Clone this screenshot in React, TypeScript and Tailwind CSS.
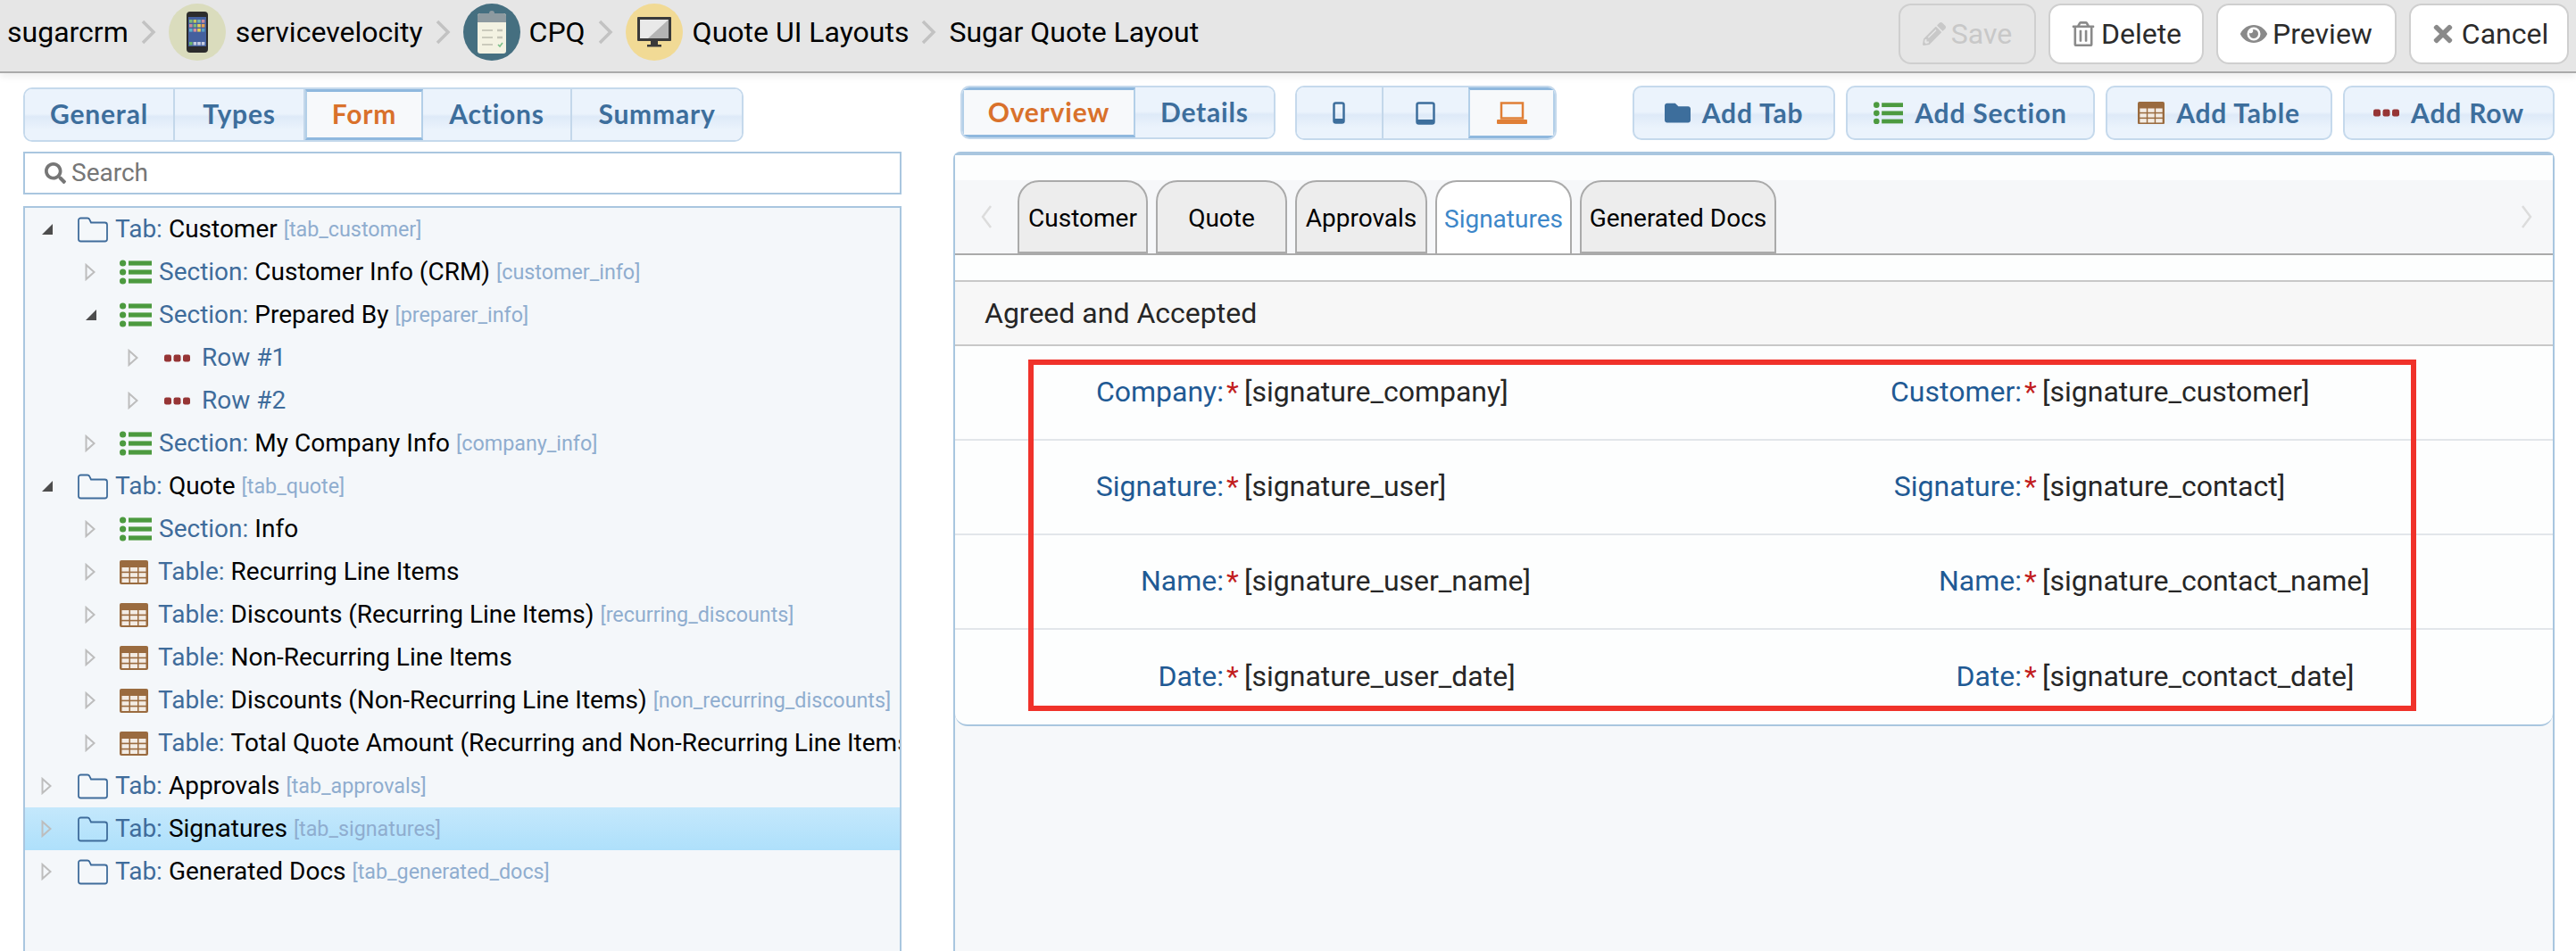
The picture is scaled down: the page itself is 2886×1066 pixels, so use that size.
import { FaPencilAlt, FaRegTrashAlt, FaEye, FaTimes, FaSearch, FaFolder } from "react-icons/fa";

const font = "[font-family:Roboto,'Liberation_Sans',sans-serif]";

function Chevron() {
  return (
    <svg width="17" height="28" viewBox="0 0 17 28" className="shrink-0">
      <path d="M2 2 L14 14 L2 26" fill="none" stroke="#c2c2c2" strokeWidth="3.5" />
    </svg>
  );
}

function PhoneArt() {
  const dots = ["#7cb87c", "#c9c95a", "#76b3b3", "#c98a9a", "#c98a9a", "#7cb87c", "#e6cf55", "#e6a050", "#5eb0c8", "#d89098", "#e6cf55", "#5aa0c0"];
  return (
    <svg width="24" height="46" viewBox="0 0 24 46">
      <rect x="0" y="0" width="24" height="46" rx="4" fill="#2c2c2c" />
      <rect x="2" y="6" width="20" height="33" fill="#44609e" />
      {dots.map((c, i) => (
        <rect key={i} x={3 + (i % 4) * 4.6} y={9 + Math.floor(i / 4) * 5} width="3.6" height="3.6" fill={c} />
      ))}
      {[0, 1, 2, 3].map((i) => (
        <rect key={i} x={3 + i * 4.6} y="34" width="3.6" height="3.6" fill={i === 0 ? "#6db56d" : "#c6cde0"} />
      ))}
    </svg>
  );
}

function ClipboardArt() {
  return (
    <svg width="34" height="50" viewBox="0 0 34 50">
      <rect x="1" y="4" width="32" height="45" rx="3" fill="#f3f2e2" />
      <path d="M1 14 V7 a3 3 0 0 1 3 -3 H30 a3 3 0 0 1 3 3 V14 Z" fill="#8d9aa0" />
      <circle cx="17" cy="4" r="3" fill="#8d9aa0" />
      <path d="M6 23 H18 M6 31 H18 M6 39 H18" stroke="#bdbdb0" strokeWidth="1.6" />
      <path d="M23 23 H29 M23 31 H29" stroke="#c5c5b8" strokeWidth="2.4" />
      <path d="M24 39 l2 2 l3 -4" stroke="#7cc08a" strokeWidth="1.6" fill="none" />
    </svg>
  );
}

function MonitorArt() {
  return (
    <svg width="38" height="34" viewBox="0 0 38 34">
      <rect x="0" y="0" width="38" height="27" rx="1" fill="#3a3a3a" />
      <rect x="3" y="3" width="32" height="21" fill="#e9e9e9" />
      <path d="M35 3 V24 H12 Z" fill="#b4b4b4" />
      <rect x="15" y="27" width="8" height="4" fill="#3a3a3a" />
      <rect x="11" y="31" width="16" height="2.5" fill="#3a3a3a" />
    </svg>
  );
}

function Bubble({ bg, children }: { bg: string; children: React.ReactNode }) {
  return (
    <span className={`flex h-16 w-16 shrink-0 items-center justify-center rounded-full ${bg}`}>{children}</span>
  );
}

function ListIcon({ size = 36 }: { size?: number }) {
  return (
    <svg width={size} height={(size * 28) / 36} viewBox="0 0 36 28" className="shrink-0">
      {[4, 14, 24].map((y) => (
        <g key={y} fill="#4c9a3f">
          <circle cx="3.6" cy={y} r="3.6" />
          <rect x="10" y={y - 2.6} width="26" height="5.2" />
        </g>
      ))}
    </svg>
  );
}

function TableIcon({ size = 32 }: { size?: number }) {
  return (
    <svg width={size} height={(size * 27) / 32} viewBox="0 0 32 27" className="shrink-0">
      <rect x="0" y="0" width="32" height="27" rx="2" fill="#9a6b3f" />
      {[0, 1, 2].map((r) =>
        [0, 1, 2].map((c) => (
          <rect key={`${r}${c}`} x={2.5 + c * 9.5} y={8 + r * 6.2} width="8" height="4.6" fill="#f3ece4" />
        ))
      )}
    </svg>
  );
}

function RowIcon() {
  return (
    <svg width="29" height="9" viewBox="0 0 29 9" className="shrink-0">
      {[0, 10.5, 21].map((x) => (
        <rect key={x} x={x} y="0.5" width="8" height="8" rx="2.2" fill="#963535" />
      ))}
    </svg>
  );
}

function FolderOutline() {
  return (
    <svg width="34" height="29" viewBox="0 0 34 29" className="shrink-0">
      <path
        d="M1 4 a2.5 2.5 0 0 1 2.5 -2.5 H11 a2.5 2.5 0 0 1 2.2 1.3 L15 6.5 H30.5 a2.5 2.5 0 0 1 2.5 2.5 V25 a2.5 2.5 0 0 1 -2.5 2.5 H3.5 A2.5 2.5 0 0 1 1 25 Z"
        fill="none"
        stroke="#3f6c9b"
        strokeWidth="1.8"
      />
    </svg>
  );
}

function Toggle({ open }: { open: boolean }) {
  if (open) {
    return (
      <svg width="14" height="14" viewBox="0 0 14 14" className="shrink-0">
        <path d="M13 1 V13 H1 Z" fill="#4d4d4d" />
      </svg>
    );
  }
  return (
    <svg width="12" height="20" viewBox="0 0 12 20" className="shrink-0">
      <path d="M1.5 2 L10.5 10 L1.5 18 Z" fill="none" stroke="#bdbdbd" strokeWidth="2" />
    </svg>
  );
}

type TreeRow = {
  level: number;
  open?: boolean;
  kind: "tab" | "section" | "table" | "row";
  label: string;
  name?: string;
  tag?: string;
  selected?: boolean;
};

const rows: TreeRow[] = [
  { level: 0, open: true, kind: "tab", label: "Tab:", name: "Customer", tag: "[tab_customer]" },
  { level: 1, kind: "section", label: "Section:", name: "Customer Info (CRM)", tag: "[customer_info]" },
  { level: 1, open: true, kind: "section", label: "Section:", name: "Prepared By", tag: "[preparer_info]" },
  { level: 2, kind: "row", label: "Row #1" },
  { level: 2, kind: "row", label: "Row #2" },
  { level: 1, kind: "section", label: "Section:", name: "My Company Info", tag: "[company_info]" },
  { level: 0, open: true, kind: "tab", label: "Tab:", name: "Quote", tag: "[tab_quote]" },
  { level: 1, kind: "section", label: "Section:", name: "Info" },
  { level: 1, kind: "table", label: "Table:", name: "Recurring Line Items" },
  { level: 1, kind: "table", label: "Table:", name: "Discounts (Recurring Line Items)", tag: "[recurring_discounts]" },
  { level: 1, kind: "table", label: "Table:", name: "Non-Recurring Line Items" },
  { level: 1, kind: "table", label: "Table:", name: "Discounts (Non-Recurring Line Items)", tag: "[non_recurring_discounts]" },
  { level: 1, kind: "table", label: "Table:", name: "Total Quote Amount (Recurring and Non-Recurring Line Items)" },
  { level: 0, kind: "tab", label: "Tab:", name: "Approvals", tag: "[tab_approvals]" },
  { level: 0, kind: "tab", label: "Tab:", name: "Signatures", tag: "[tab_signatures]", selected: true },
  { level: 0, kind: "tab", label: "Tab:", name: "Generated Docs", tag: "[tab_generated_docs]" },
];

function Row({ row }: { row: TreeRow }) {
  const pad = row.level === 0 ? "pl-[18px]" : row.level === 1 ? "pl-[67px]" : "pl-[115px]";
  const toggleBox = row.level === 0 ? "w-[41px]" : row.level === 1 ? "w-[39px]" : "w-[41px]";
  const labelGap = row.kind === "row" ? "ml-[13px]" : row.kind === "table" ? "ml-[11px]" : "ml-[8px]";
  return (
    <div
      className={`flex h-12 items-center whitespace-nowrap text-[28px] ${pad} ${
        row.selected ? "bg-gradient-to-b from-[#c4e8fc] to-[#aee0fb]" : ""
      }`}
    >
      <span className={`flex shrink-0 items-center ${toggleBox}`}>
        <Toggle open={!!row.open} />
      </span>
      {row.kind === "tab" && <FolderOutline />}
      {row.kind === "section" && <ListIcon />}
      {row.kind === "table" && <TableIcon />}
      {row.kind === "row" && <RowIcon />}
      <span className={`${labelGap} text-[#3f6c9b]`}>{row.label}</span>
      {row.name && <span className="ml-[7px] text-black">{row.name}</span>}
      {row.tag && <span className="ml-[7px] text-[23.3px] text-[#8fadcf]">{row.tag}</span>}
    </div>
  );
}

const btnBg = "bg-[linear-gradient(to_bottom,#ebf3fc_0%,#ebf3fc_48%,#deeaf8_54%,#ebf3fc_80%)]";
const btnFont = "[font-family:Lato,Roboto,sans-serif] text-[30px] font-bold tracking-[0.8px]";

function Seg({ label, active, w }: { label: string; active?: boolean; w: string }) {
  return (
    <div
      className={`flex h-full items-center justify-center pb-[2px] ${btnFont} ${w} ${
        active
          ? "border-x-2 border-y-[3px] border-x-[#b3cfe8] border-y-[#8fb8de] bg-[#f7f9fb] text-[#d9712b]"
          : `border-r-2 border-[#c3d7ea] text-[#3d6e9c] last:border-r-0 ${btnBg}`
      }`}
    >
      {label}
    </div>
  );
}

function TopButton({ w, disabled, icon, label }: { w: string; disabled?: boolean; icon: React.ReactNode; label: string }) {
  return (
    <button
      className={`flex h-[68px] items-center justify-center gap-[6px] rounded-[14px] border-2 border-[#cfcfcf] text-[32px] ${w} ${
        disabled ? "bg-[#e6e6e6] text-[#c8c8c8]" : "bg-white text-[#2b2b2b]"
      }`}
    >
      {icon}
      {label}
    </button>
  );
}

function AddButton({ w, icon, label }: { w: string; icon: React.ReactNode; label: string }) {
  return (
    <button
      className={`flex h-[61px] items-center justify-center gap-[13px] rounded-[10px] border-2 border-[#c5d9ec] text-[#3d6e9c] ${btnFont} ${w} ${btnBg}`}
    >
      {icon}
      {label}
    </button>
  );
}

function FormTab({ label, w, active }: { label: string; w: string; active?: boolean }) {
  return (
    <div
      className={`flex h-[82px] items-center justify-center rounded-t-[24px] border-2 border-[#aaaaaa] pt-[4px] text-[28px] ${w} ${
        active ? "-mb-[2px] border-b-0 bg-white text-[#3d87c9]" : "bg-[#ededed] text-black"
      }`}
    >
      {label}
    </div>
  );
}

const fields = [
  ["Company:", "[signature_company]", "Customer:", "[signature_customer]"],
  ["Signature:", "[signature_user]", "Signature:", "[signature_contact]"],
  ["Name:", "[signature_user_name]", "Name:", "[signature_contact_name]"],
  ["Date:", "[signature_user_date]", "Date:", "[signature_contact_date]"],
];

function Field({ label, value }: { label: string; value: string }) {
  return (
    <div className="flex items-center pb-[3px] text-[32px]">
      <span className="w-[301px] text-right text-[#1f5a94]">{label}</span>
      <span className="ml-[3px] w-[20px] text-[#c21f1f]">*</span>
      <span className="text-[#262626]">{value}</span>
    </div>
  );
}

export default function App() {
  return (
    <div className={`flex h-[1066px] flex-col overflow-hidden bg-white ${font}`}>
      <header className="z-10 flex h-[82px] shrink-0 items-start justify-between border-b-2 border-[#aaaaaa] bg-[#e6e6e6] pl-2 pr-2 pt-1 shadow-[0_4px_8px_rgba(0,0,0,0.07)]">
        <nav className="flex h-16 items-center whitespace-nowrap text-[32px] text-black">
          <span>sugarcrm</span>
          <span className="mx-[14px]"><Chevron /></span>
          <Bubble bg="bg-[#dadcbd]"><PhoneArt /></Bubble>
          <span className="ml-[11px]">servicevelocity</span>
          <span className="mx-[14px]"><Chevron /></span>
          <Bubble bg="bg-[#456f80]"><ClipboardArt /></Bubble>
          <span className="ml-[10px]">CPQ</span>
          <span className="mx-[14px]"><Chevron /></span>
          <Bubble bg="bg-[#f1da95]"><MonitorArt /></Bubble>
          <span className="ml-[11px]">Quote UI Layouts</span>
          <span className="mx-[14px]"><Chevron /></span>
          <span>Sugar Quote Layout</span>
        </nav>
        <div className="flex gap-[14px]">
          <TopButton w="w-[154px]" disabled icon={<FaPencilAlt className="text-[26px]" />} label="Save" />
          <TopButton w="w-[174px]" icon={<FaRegTrashAlt className="text-[28px] text-[#8a8a8a]" />} label="Delete" />
          <TopButton w="w-[202px]" icon={<FaEye className="text-[30px] text-[#8a8a8a]" />} label="Preview" />
          <TopButton w="w-[179px]" icon={<FaTimes className="text-[30px] text-[#8a8a8a]" />} label="Cancel" />
        </div>
      </header>

      <main className="flex min-h-0 flex-1">
        <section className="flex w-[1010px] shrink-0 flex-col pl-[26px] pt-4">
          <div className="flex h-[61px] w-[807px] overflow-hidden rounded-[10px] border-2 border-[#c5d9ec]">
            <Seg label="General" w="w-[168px]" />
            <Seg label="Types" w="w-[146px]" />
            <Seg label="Form" active w="w-[132px]" />
            <Seg label="Actions" w="w-[167px]" />
            <Seg label="Summary" w="w-[190px]" />
          </div>
          <div className="mt-[11px] flex h-[48px] items-center gap-[6px] border-2 border-[#a9c6df] bg-white pl-[22px] text-[28px] text-[#767676]">
            <FaSearch className="text-[24px]" />
            Search
          </div>
          <div className="mt-[13px] min-h-0 flex-1 overflow-hidden border-x-2 border-t-2 border-[#a9c6df] bg-[#f4f7fa]">
            {rows.map((r) => (
              <Row key={r.tag ?? r.name ?? r.label} row={r} />
            ))}
          </div>
        </section>

        <section className="flex min-w-0 flex-1 flex-col pl-[58px] pr-[24px] pt-[14px]">
          <div className="flex h-[62px] items-stretch pl-[8px]">
            <div className="flex h-[60px] w-[353px] overflow-hidden rounded-[10px] border-2 border-[#c5d9ec]">
              <Seg label="Overview" active w="w-[196px]" />
              <Seg label="Details" w="w-[157px]" />
            </div>
            <div className="ml-[22px] flex h-[61px] w-[293px] overflow-hidden rounded-[10px] border-2 border-[#c5d9ec]">
              <div className={`flex w-[98px] items-center justify-center border-r-2 border-[#c3d7ea] ${btnBg}`}>
                <svg width="14" height="25" viewBox="0 0 14 25"><rect x="1.5" y="1.5" width="11" height="22" rx="2" fill="none" stroke="#3d6e9c" strokeWidth="2.5" /><rect x="1.5" y="19" width="11" height="4.5" fill="#3d6e9c" /></svg>
              </div>
              <div className={`flex w-[97px] items-center justify-center ${btnBg}`}>
                <svg width="22" height="26" viewBox="0 0 22 26"><rect x="1.5" y="1.5" width="19" height="23" rx="2" fill="none" stroke="#3d6e9c" strokeWidth="2.5" /><rect x="1.5" y="20" width="19" height="4.5" fill="#3d6e9c" /></svg>
              </div>
              <div className="flex w-[98px] items-center justify-center border-x-2 border-y-[3px] border-x-[#b3cfe8] border-y-[#8fb8de] bg-[#f7f9fb]">
                <svg width="34" height="25" viewBox="0 0 34 25"><rect x="5" y="1.5" width="24" height="17" fill="none" stroke="#e07f36" strokeWidth="2.5" /><rect x="0" y="20" width="34" height="5" rx="1" fill="#e07f36" /></svg>
              </div>
            </div>
            <div className="ml-auto flex gap-[12px]">
              <AddButton w="w-[227px]" icon={<FaFolder className="text-[29px] text-[#3d6e9c]" />} label="Add Tab" />
              <AddButton w="w-[279px]" icon={<ListIcon size={33} />} label="Add Section" />
              <AddButton w="w-[254px]" icon={<TableIcon size={30} />} label="Add Table" />
              <AddButton w="w-[237px]" icon={<RowIcon />} label="Add Row" />
            </div>
          </div>

          <div className="mt-[12px] min-h-0 flex-1 rounded-t-[8px] border-x-2 border-t-[4px] border-[#a9c6df] bg-[#f6f8fa]">
            <div className="overflow-hidden rounded-b-[14px] border-b-2 border-[#a9c6df] bg-[#fdfefe]">
              <div className="h-[28px]" />
              <div className="flex h-[84px] items-end border-b-2 border-[#aaaaaa] bg-[#f6f7f9]">
                <div className="flex h-full w-[70px] items-center justify-center">
                  <svg width="14" height="28" viewBox="0 0 14 28"><path d="M12 2 L3 14 L12 26" fill="none" stroke="#dcdcdc" strokeWidth="2.5" /></svg>
                </div>
                <div className="flex gap-[9px]">
                  <FormTab label="Customer" w="w-[146px]" />
                  <FormTab label="Quote" w="w-[147px]" />
                  <FormTab label="Approvals" w="w-[148px]" />
                  <FormTab label="Signatures" w="w-[153px]" active />
                  <FormTab label="Generated Docs" w="w-[220px]" />
                </div>
                <div className="ml-auto flex h-full w-[58px] items-center justify-center">
                  <svg width="14" height="28" viewBox="0 0 14 28"><path d="M2 2 L11 14 L2 26" fill="none" stroke="#dcdcdc" strokeWidth="2.5" /></svg>
                </div>
              </div>
              <div className="h-[28px]" />
              <div className="flex h-[74px] items-center border-y-2 border-[#c8c8c8] bg-[#f7f7f7] pl-[33px] text-[32px] text-[#262626]">
                Agreed and Accepted
              </div>
              <div className="relative">
                {fields.map((f, i) => (
                  <div key={i} className={`grid h-[106px] grid-cols-[894px_1fr] items-center ${i < 3 ? "border-b-2 border-[#e2e6ea]" : ""}`}>
                    <Field label={f[0]} value={f[1]} />
                    <Field label={f[2]} value={f[3]} />
                  </div>
                ))}
                <div className="absolute left-[82px] top-[15px] h-[394px] w-[1555px] border-[6px] border-[#f0322a]" />
              </div>
            </div>
          </div>
        </section>
      </main>
    </div>
  );
}
